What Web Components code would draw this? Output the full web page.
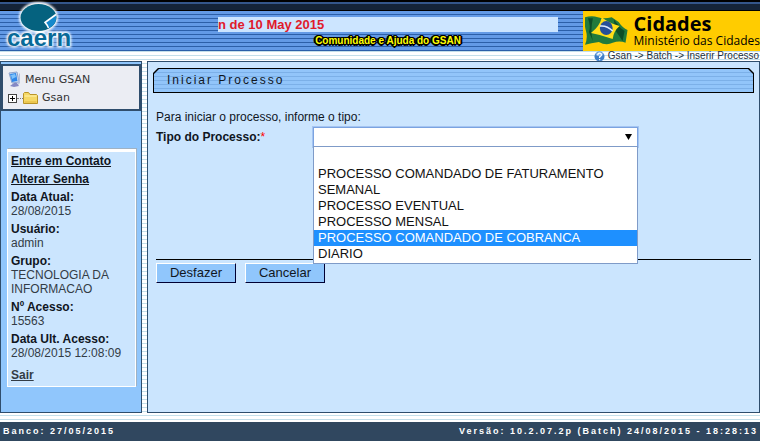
<!DOCTYPE html>
<html lang="pt-BR">
<head>
<meta charset="utf-8">
<title>GSAN - Iniciar Processo</title>
<style>
    body {
        margin: 0;
        font: 12px/14px "Liberation Sans", Arial, sans-serif;
        color: #10161e;
        background: repeating-linear-gradient(#fff 0 3px, #c4dfea 3px 4px);
    }
</style>
</head>
<body>
<gsan-app></gsan-app>

<script>
// Logo, aviso e marca do ministério
class GsanHeader extends HTMLElement {
    constructor() {
        super();
        let shadowRoot = this.attachShadow({mode: 'open'});
        shadowRoot.innerHTML = `
            <style>
                :host {
                    display: grid;
                    grid-template-columns: 218px minmax(0, 340px) 1fr;
                    height: 40px;
                    border-top: 11px solid transparent;
                    background:
                        linear-gradient(#000 0 2px, #34568a 2px 4px, #152438 4px 10px, #000 10px 11px) border-box 0 0 / 100% 11px no-repeat,
                        repeating-linear-gradient(#639ae6 0 3px, #2c5fa8 3px 4px) padding-box;
                }
                .logo {margin-top: -11px;}
                svg {display: block;}
                .middle {padding-top: 6px; text-align: center;}
                .notice {
                    overflow: hidden;
                    white-space: nowrap;
                    text-align: left;
                    font-size: 13px;
                    line-height: 15px;
                    font-weight: bold;
                    color: #e01a2b;
                    background: #cce5ff;
                }
                a {
                    display: block;
                    margin-top: 3px;
                    font-size: 10px;
                    line-height: 12px;
                    font-weight: bold;
                    color: #ff0;
                    text-decoration: none;
                    text-shadow: 1px 0 #000, -1px 0 #000, 0 1px #000, 0 -1px #000, 1px 1px #000, -1px -1px #000, 1px -1px #000, -1px 1px #000, 2px 0 #000, -2px 0 #000, 0 2px #000;
                }
                .brand {
                    justify-self: end;
                    display: flex;
                    gap: 6px;
                    box-sizing: border-box;
                    width: 177px;
                    padding: 3px 0 0 2px;
                    white-space: nowrap;
                    font-family: "Open Sans", "Noto Sans", sans-serif;
                    color: #000;
                    background: #fc0;
                }
                .brand strong {display: block; font-size: 20px; line-height: 20px;}
                .brand span {display: block; font-size: 12px; line-height: 14px;}
            </style>
            <div class="logo">
                <svg width="80" height="51" viewBox="0 0 80 51" role="img" aria-label="caern">
                    <defs><filter id="glow" x="-20%" y="-20%" width="140%" height="140%"><feGaussianBlur stdDeviation="1"/></filter></defs>
                    <g fill="#fff" stroke="#fff" stroke-width="3" filter="url(#glow)">
                        <ellipse cx="38.500" cy="17.500" rx="18" ry="14"/>
                        <text x="7" y="46" font-family="Liberation Sans, Arial, sans-serif" font-weight="bold" font-size="24" aria-hidden="true">caern</text>
                    </g>
                    <ellipse cx="38.500" cy="17.500" rx="18" ry="13.500" fill="#05627f"/>
                    <path d="M56 15l-11 8 4 5c5-2 8-7 7-13z" fill="#1689cc"/>
                    <path d="M56 14.500L45 22.500l2 2.500 1.500 3" fill="none" stroke="#fff" stroke-width="1.600"/>
                    <text x="7" y="46" font-family="Liberation Sans, Arial, sans-serif" font-weight="bold" font-size="24" fill="#086a98">caern</text>
                </svg>
            </div>
            <div class="middle">
                <div class="notice">n de 10 May 2015</div>
                <a href="#comunidade">Comunidade e Ajuda do GSAN</a>
            </div>
            <div class="brand">
                <svg width="43" height="34" viewBox="0 0 43 34">
                    <path d="M0 3Q7 1 13 3T27 3L34 8Q38 14 43 16L41 29Q35 26 28 29T14 28Q6 29 0 31Q3 24 1 17T0 3z" fill="#217a3c"/>
                    <path d="M3 4Q6 12 4 18L8 27Q5 17 8 4zM29 5L36 14 40 17 38 27Q34 21 31 17z" fill="#0d4d27"/>
                    <path d="M6 19Q15 12 17 3Q24 9 35 12Q29 17 28 25Q17 21 6 19z" fill="#ffdd18"/>
                    <ellipse cx="21.500" cy="14" rx="6.500" ry="7" fill="#244f99"/>
                    <path d="M15 12Q22 11 28 17" fill="none" stroke="#dceaff" stroke-width="1.500"/>
                </svg>
                <div><strong>Cidades</strong><span>Ministério das Cidades</span></div>
            </div>
        `;
    }
}
customElements.define('gsan-header', GsanHeader);

// Caminho da tela
class GsanBreadcrumb extends HTMLElement {
    constructor() {
        super();
        let shadowRoot = this.attachShadow({mode: 'open'});
        shadowRoot.innerHTML = `
            <style>
                :host {
                    display: flex;
                    justify-content: flex-end;
                    align-items: center;
                    gap: 3px;
                    height: 10px;
                    padding-right: 1px;
                    font-size: 10px;
                    line-height: 10px;
                    color: #24303c;
                }
            </style>
            <svg width="11" height="11" viewBox="0 0 11 11">
                <circle cx="5.500" cy="5.500" r="5" fill="#3f7fca"/>
                <path d="M1.500 4a4.200 4.200 0 0 1 8 0q-4 2-8 0z" fill="#8bb8e8"/>
                <path d="M3.800 4.200q0-2 1.800-2t1.800 1.700q0 1-1.800 2V7M5.600 8v1.200" fill="none" stroke="#fff" stroke-width="1.300"/>
            </svg>
            <slot></slot>
        `;
    }
}
customElements.define('gsan-breadcrumb', GsanBreadcrumb);

class MenuTree extends HTMLElement {
    constructor() {
        super();
        let shadowRoot = this.attachShadow({mode: 'open'});
        shadowRoot.innerHTML = `
            <style>
                :host {
                    display: block;
                    padding: 5px 5px 2px;
                    border: 2px solid #2f4d6c;
                    font: 11px/18px "DejaVu Sans", Verdana, sans-serif;
                    color: #333;
                    background: #ebedf3;
                }
                div {display: flex; align-items: center; gap: 4px;}
                button {
                    width: 9px;
                    height: 9px;
                    padding: 0;
                    border: 1px solid #444;
                    background:
                        linear-gradient(#000, #000) center / 5px 1px no-repeat,
                        linear-gradient(#000, #000) center / 1px 5px no-repeat,
                        #fff;
                }
                i {width: 6px; margin: 0 -4px; border-top: 1px dotted #777;}
            </style>
            <div>
                <svg width="13" height="18" viewBox="0 0 13 18">
                    <path d="M1 2l8-1 2 10-7 1z" fill="#d5e0f2" stroke="#8da3cc"/>
                    <path d="M2 3l6-1 1.500 8L4 11z" fill="#2e86e8"/>
                    <path d="M3 4l4-1 1 3-4 2z" fill="#7fc3fb"/>
                    <path d="M6 12h3l2 3-5 1-4-1z" fill="#8488c4"/>
                    <path d="M11 2l1 1v9l-2 2z" fill="#b5bfdc"/>
                </svg>
                <span>Menu GSAN</span>
            </div>
            <div>
                <button aria-label="Expandir Gsan"></button><i></i>
                <svg width="15" height="14" viewBox="0 0 15 14">
                    <path d="M.5 12.500v-10l1-1h4l1.500 2h6.500l1 1v8z" fill="#f5d865" stroke="#ba9428"/>
                    <path d="M1.500 5h12" stroke="#fff3ad"/>
                    <path d="M1.500 11h12" stroke="#e2b63c"/>
                </svg>
                <span>Gsan</span>
            </div>
        `;
    }
}
customElements.define('menu-tree', MenuTree);

class SessionInfo extends HTMLElement {
    constructor() {
        super();
        let shadowRoot = this.attachShadow({mode: 'open'});
        let info = [
            {'label': 'Data Atual:', 'value': '28/08/2015'},
            {'label': 'Usuário:', 'value': 'admin'},
            {'label': 'Grupo:', 'value': 'TECNOLOGIA DA INFORMACAO'},
            {'label': 'Nº Acesso:', 'value': '15563'},
            {'label': 'Data Ult. Acesso:', 'value': '28/08/2015 12:08:09'},
        ];
        shadowRoot.innerHTML = `
            <style>
                :host {
                    display: block;
                    padding: 2px 3px 3px;
                    border: 1px solid #fff;
                    border-top-width: 3px;
                    background: #cbe5fe;
                    box-shadow: 1px -1px #9fb2c4;
                }
                a {display: block; width: max-content; margin-bottom: 4px; font-weight: bold; color: inherit;}
                dl {margin: 0;}
                dt {font-weight: bold;}
                dd {margin: 0 0 4px; color: #333c46;}
                .exit {margin: 8px 0 1px; color: #333c46;}
            </style>
            <a href="#contato">Entre em Contato</a>
            <a href="#senha">Alterar Senha</a>
            <dl>
                ${info.map(item => `<dt>${item.label}</dt><dd>${item.value}</dd>`).join('\n')}
            </dl>
            <a class="exit" href="#sair">Sair</a>
        `;
    }
}
customElements.define('session-info', SessionInfo);

// Barra de título com os cantos superiores cortados
class PanelTitle extends HTMLElement {
    constructor() {
        super();
        let shadowRoot = this.attachShadow({mode: 'open'});
        shadowRoot.innerHTML = `
            <style>
                :host {
                    display: block;
                    padding: 1px;
                    background: #000;
                    clip-path: polygon(5px 0, calc(100% - 5px) 0, 100% 5px, 100% 100%, 0 100%, 0 5px);
                }
                h1 {
                    margin: 0;
                    padding: 0 13px;
                    font-size: 12px;
                    line-height: 23px;
                    font-weight: normal;
                    letter-spacing: 2px;
                    background: repeating-linear-gradient(#92c5fa 0 3px, #7cb0e8 3px 4px);
                    clip-path: polygon(5px 0, calc(100% - 5px) 0, 100% 5px, 100% 100%, 0 100%, 0 5px);
                }
            </style>
            <h1><slot></slot></h1>
        `;
    }
}
customElements.define('panel-title', PanelTitle);

// Caixa de seleção com a lista aberta
class OpenSelect extends HTMLElement {
    constructor() {
        super();
        let shadowRoot = this.attachShadow({mode: 'open'});
        let options = [
            '',
            'PROCESSO COMANDADO DE FATURAMENTO',
            'SEMANAL',
            'PROCESSO EVENTUAL',
            'PROCESSO MENSAL',
            'PROCESSO COMANDADO DE COBRANCA',
            'DIARIO',
        ];
        let active = 5;
        shadowRoot.innerHTML = `
            <style>
                :host {display: block; position: relative;}
                .box {display: grid; align-items: center;}
                select, svg {grid-area: 1 / 1;}
                select {
                    appearance: none;
                    width: 100%;
                    height: 20px;
                    margin: 0;
                    padding: 0 4px;
                    border: 1px solid #7ba3e0;
                    border-radius: 0;
                    outline: 0;
                    font: 13px/16px "Liberation Sans", Arial, sans-serif;
                    background: #fff;
                    box-shadow: 0 0 0 1px #a5c5f2;
                }
                svg {justify-self: end; margin-right: 6px; pointer-events: none;}
                ul {
                    position: absolute;
                    top: 100%;
                    left: 0;
                    right: 0;
                    margin: -1px 0 0;
                    padding: 3px 0 1px;
                    border: 1px solid #7f9bc8;
                    list-style: none;
                    font-size: 13px;
                    line-height: 16px;
                    color: #111;
                    background: #fff;
                }
                li {height: 16px; padding: 0 4px; white-space: nowrap;}
                li.active {color: #fff; background: #1e90ff;}
            </style>
            <div class="box">
                <select aria-label="Tipo do Processo">
                    ${options.map(text => `<option>${text}</option>`).join('\n')}
                </select>
                <svg width="7" height="6" viewBox="0 0 7 6"><path d="M0 0h7L3.500 6z"/></svg>
            </div>
            <ul role="listbox">
                ${options.map((text, i) => `<li role="option"${i === active ? ' class="active" aria-selected="true"' : ''}>${text}</li>`).join('\n')}
            </ul>
        `;
        let select = this.shadowRoot.querySelector('select');
        let list = this.shadowRoot.querySelector('ul');
        Array.from(list.children).forEach((item, i) => {
            item.addEventListener('click', () => {
                select.selectedIndex = i;
                list.style.display = 'none';
            });
        });
    }

    focus() {
        this.shadowRoot.querySelector('select').focus();
    }
}
customElements.define('open-select', OpenSelect);

class ProcessForm extends HTMLElement {
    constructor() {
        super();
        let shadowRoot = this.attachShadow({mode: 'open'});
        shadowRoot.innerHTML = `
            <style>
                :host {display: block; padding: 6px 5px;}
                form {padding: 17px 3px 0;}
                p {margin: 0 0 3px;}
                .row {display: grid; grid-template-columns: 157px minmax(0, 325px); align-items: center; min-height: 20px;}
                label {font-weight: bold;}
                label span {font-weight: normal; color: #f00;}
                .actions {
                    display: flex;
                    gap: 9px;
                    margin-top: 112px;
                    padding-top: 3px;
                    border-top: 1px solid #000;
                }
                button {
                    width: 80px;
                    height: 20px;
                    padding: 0;
                    border: 1px solid;
                    border-color: #fff #003 #003 #fff;
                    font: 13px/16px "Liberation Sans", Arial, sans-serif;
                    color: #10161e;
                    background: #90c6fc;
                }
            </style>
            <panel-title>Iniciar Processo</panel-title>
            <form>
                <p>Para iniciar o processo, informe o tipo:</p>
                <div class="row">
                    <label for="tipo">Tipo do Processo:<span>*</span></label>
                    <open-select id="tipo"></open-select>
                </div>
                <div class="actions">
                    <button type="reset">Desfazer</button>
                    <button type="button">Cancelar</button>
                </div>
            </form>
        `;
        let label = this.shadowRoot.querySelector('label');
        label.addEventListener('click', () => this.shadowRoot.querySelector('open-select').focus());
    }
}
customElements.define('process-form', ProcessForm);

class GsanFooter extends HTMLElement {
    constructor() {
        super();
        let shadowRoot = this.attachShadow({mode: 'open'});
        shadowRoot.innerHTML = `
            <style>
                :host {
                    display: flex;
                    justify-content: space-between;
                    padding: 0 2px 0 3px;
                    font-size: 9px;
                    line-height: 19px;
                    font-weight: bold;
                    letter-spacing: 2px;
                    color: #fff;
                    background: #30475f;
                }
            </style>
            <span>Banco: 27/05/2015</span>
            <span>Versão: 10.2.07.2p (Batch) 24/08/2015 - 18:28:13</span>
        `;
    }
}
customElements.define('gsan-footer', GsanFooter);

class GsanApp extends HTMLElement {
    constructor() {
        super();
        let shadowRoot = this.attachShadow({mode: 'open'});
        shadowRoot.innerHTML = `
            <style>
                :host {display: flex; flex-direction: column; min-height: 100vh;}
                .columns {flex: 1; display: flex; gap: 5px; margin-bottom: 9px;}
                aside, main {border: 1px solid #2f4d6c;}
                aside {box-sizing: border-box; width: 142px; padding-top: 2px; background: #90c6fc;}
                session-info {margin: 38px 5px 0 6px;}
                main {flex: 1; min-width: 0; background: #cbe5fe;}
            </style>
            <gsan-header></gsan-header>
            <gsan-breadcrumb>Gsan -&gt; Batch -&gt; Inserir Processo</gsan-breadcrumb>
            <div class="columns">
                <aside>
                    <menu-tree></menu-tree>
                    <session-info></session-info>
                </aside>
                <main><process-form></process-form></main>
            </div>
            <gsan-footer></gsan-footer>
        `;
    }
}
customElements.define('gsan-app', GsanApp);
</script>
</body>
</html>
